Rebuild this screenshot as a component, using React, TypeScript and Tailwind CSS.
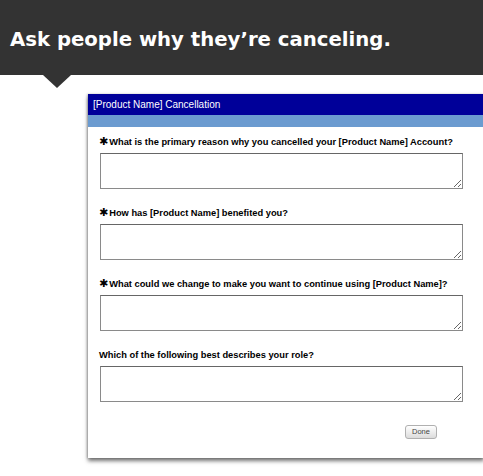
import React from "react";

const questions = [
  { text: "What is the primary reason why you cancelled your [Product Name] Account?", required: true },
  { text: "How has [Product Name] benefited you?", required: true },
  { text: "What could we change to make you want to continue using [Product Name]?", required: true },
  { text: "Which of the following best describes your role?", required: false },
];

const Question = ({ text, required }: { text: string; required: boolean }) => (
  <div className="flex flex-col">
    <label className="flex items-center h-[12px] text-[9.3px] font-bold text-black leading-[12px] [font-family:'Liberation_Sans',Arial,sans-serif]">
      {required && (
        <span className="text-[11px] mr-[1px] [font-family:'DejaVu_Sans',sans-serif]">✱</span>
      )}
      {text}
    </label>
    <textarea className="mt-[5px] ml-[1px] w-[363px] h-[36px] border border-[#8a8a8a] border-t-[#666] bg-white resize-y outline-none" />
  </div>
);

export default function App() {
  return (
    <div className="w-[483px] h-[476px] bg-white overflow-hidden">
      <div className="h-[75px] bg-[#333333] flex items-end pb-[25px] pl-[10px]">
        <h1 className="text-white font-bold text-[19.7px] leading-none [font-family:'DejaVu_Sans',sans-serif]">
          Ask people why they’re canceling.
        </h1>
      </div>
      <div className="ml-[43px] w-0 h-0 border-l-[14px] border-r-[14px] border-t-[13px] border-l-transparent border-r-transparent border-t-[#333333]" />
      <div className="mt-[6px] ml-[88px] w-[396px] h-[364px] bg-white shadow-[0_3px_4px_rgba(0,0,0,0.55),-1px_0_2px_rgba(0,0,0,0.2)] flex flex-col">
        <div className="h-[21px] bg-[#000099] text-white text-[10px] pl-[5px] flex items-center [font-family:'Liberation_Sans',Arial,sans-serif]">
          [Product Name] Cancellation
        </div>
        <div className="h-[12px] bg-[#6b9bd0]" />
        <div className="pt-[9px] pl-[11px] flex flex-col gap-[18px]">
          {questions.map((q) => (
            <Question key={q.text} text={q.text} required={q.required} />
          ))}
        </div>
        <div className="flex justify-end pr-[47px] mt-[23px]">
          <button className="w-[32px] h-[14px] rounded-[3px] border border-[#b0b0b0] bg-gradient-to-b from-white to-[#dcdcdc] text-[7.5px] text-[#444] leading-none [font-family:'Liberation_Sans',Arial,sans-serif]">
            Done
          </button>
        </div>
      </div>
    </div>
  );
}
